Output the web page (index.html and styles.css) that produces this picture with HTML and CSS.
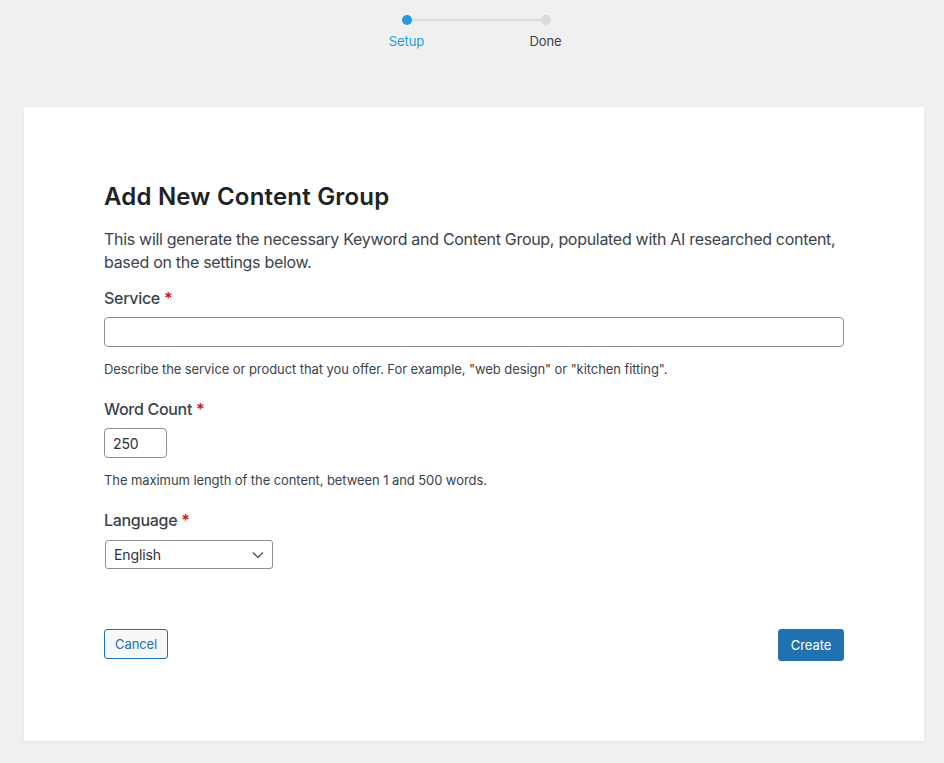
FILE: index.html
```html
<!DOCTYPE html>
<html lang="en">
<head>
<meta charset="utf-8">
<title>Add New Content Group</title>
<link rel="stylesheet" href="styles.css">
</head>
<body>
<div class="stepper">
  <div class="step active">
    <span class="dot"></span>
    <span class="step-label">Setup</span>
  </div>
  <div class="step">
    <span class="dot"></span>
    <span class="step-label">Done</span>
  </div>
</div>

<div class="card">
  <h1 class="title">Add New Content Group</h1>
  <p class="intro">This will generate the necessary Keyword and Content Group, populated with AI researched content, based on the settings below.</p>

  <div class="field">
    <label class="label" for="service">Service <span class="req">*</span></label>
    <input class="input input-wide" id="service" type="text">
    <p class="help">Describe the service or product that you offer. For example, "web design" or "kitchen fitting".</p>
  </div>

  <div class="field">
    <label class="label" for="count">Word Count <span class="req">*</span></label>
    <input class="input input-small" id="count" type="text" value="250">
    <p class="help">The maximum length of the content, between 1 and 500 words.</p>
  </div>

  <div class="field">
    <label class="label" for="lang">Language <span class="req">*</span></label>
    <div class="select">
      <span class="select-value">English</span>
      <svg class="chev" width="12" height="8" viewBox="0 0 12 8"><path d="M1 1.5l5 5 5-5" fill="none" stroke="#50575e" stroke-width="1.4"/></svg>
    </div>
  </div>

  <div class="actions">
    <button class="btn btn-secondary">Cancel</button>
    <button class="btn btn-primary">Create</button>
  </div>
</div>
</body>
</html>
```

FILE: styles.css
```css
* { box-sizing: border-box; }
html, body { margin: 0; padding: 0; }
body {
  background: #f0f0f0;
  font-family: Inter, "Noto Sans", "Liberation Sans", sans-serif;
  color: #3c434a;
  width: 944px;
  height: 763px;
  overflow: hidden;
}

.stepper {
  display: flex;
  justify-content: center;
  padding-top: 15px;
  margin-left: 8px;
}
.step {
  position: relative;
  width: 139px;
  display: flex;
  flex-direction: column;
  align-items: center;
}
.step:first-child::after {
  content: "";
  position: absolute;
  top: 4px;
  left: 69px;
  width: 139px;
  height: 2px;
  background: #dcdcde;
}
.dot {
  position: relative;
  z-index: 1;
  width: 10px;
  height: 10px;
  border-radius: 50%;
  background: #dcdcde;
}
.step.active .dot { background: #2a9ad6; }
.step-label {
  margin-top: 8px;
  font-size: 13px;
  line-height: 16px;
  letter-spacing: -0.08px;
  color: #3c434a;
}
.step.active .step-label { color: #2a9ad6; }

.card {
  margin: 58px 0 0 24px;
  width: 900px;
  height: 634px;
  background: #fff;
  box-shadow: 0 1px 3px rgba(0,0,0,0.06);
  padding: 75px 80px 80px;
  display: flex;
  flex-direction: column;
}

.title {
  margin: 0;
  font-size: 24px;
  line-height: 30px;
  font-weight: 600;
  letter-spacing: 0.2px;
  color: #1d2327;
}
.intro {
  margin: 16px 0 0;
  font-size: 16px;
  line-height: 23px;
  letter-spacing: -0.3px;
  color: #3c434a;
}

.field { display: flex; flex-direction: column; align-items: flex-start; }
.field + .field { margin-top: 18px; }
.intro + .field { margin-top: 12px; }

.label {
  font-size: 16px;
  line-height: 24px;
  font-weight: 500;
  letter-spacing: -0.3px;
  color: #3c434a;
  margin-bottom: 7px;
}
.req { color: #cc1818; font-weight: 600; }

.input {
  height: 30px;
  border: 1px solid #8c8f94;
  border-radius: 4px;
  font: inherit;
  font-size: 14px;
  letter-spacing: -0.1px;
  color: #2c3338;
  padding: 0 8px;
  background: #fff;
}
.input-wide { width: 740px; }
.input-small { width: 63px; }

.help {
  margin: 12px 0 0;
  font-size: 13px;
  line-height: 20px;
  letter-spacing: -0.08px;
  color: #3c434a;
}

.select {
  margin: 1px 0 0 1px;
  width: 168px;
  height: 29px;
  border: 1px solid #8c8f94;
  border-radius: 3px;
  display: flex;
  align-items: center;
  justify-content: space-between;
  padding: 0 8px 0 8px;
  font-size: 14px;
  letter-spacing: -0.1px;
  color: #2c3338;
}
.chev { display: block; }

.actions {
  margin-top: 60px;
  display: flex;
  justify-content: space-between;
  align-items: flex-start;
}
.btn {
  font: inherit;
  font-size: 13px;
  letter-spacing: -0.08px;
  height: 30px;
  padding: 0 10px;
  border-radius: 3px;
  cursor: pointer;
}
.btn-secondary {
  width: 64px;
  background: #f6f7f7;
  border: 1px solid #2271b1;
  color: #2271b1;
}
.btn-primary {
  width: 66px;
  height: 32px;
  background: #2271b1;
  border: 1px solid #2271b1;
  color: #fff;
}
```
